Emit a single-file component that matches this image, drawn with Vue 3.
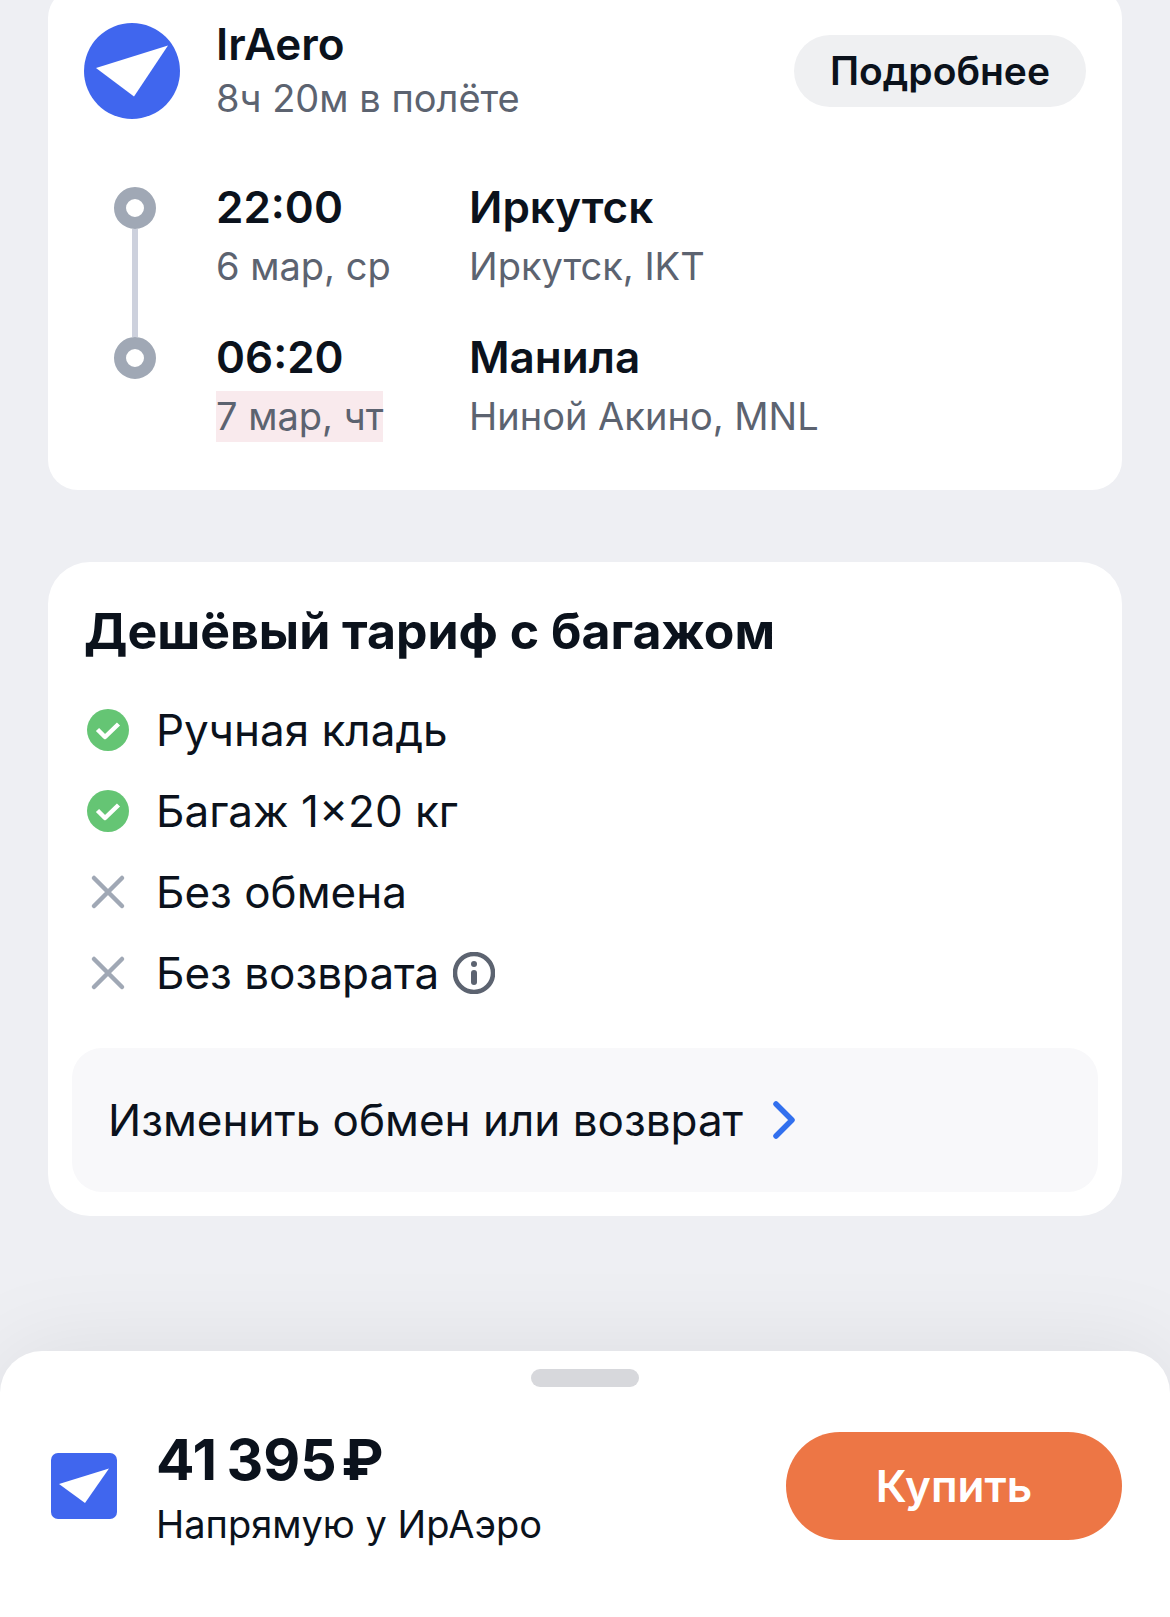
<script setup>
const stops = [
  { time: '22:00', date: '6 мар, ср', city: 'Иркутск', airport: 'Иркутск, IKT', nextDay: false },
  { time: '06:20', date: '7 мар, чт', city: 'Манила', airport: 'Ниной Акино, MNL', nextDay: true },
]

const conditions = [
  { text: 'Ручная кладь', included: true },
  { text: 'Багаж 1×20 кг', included: true },
  { text: 'Без обмена', included: false },
  { text: 'Без возврата', included: false, info: true },
]
</script>

<template>
  <div class="page">
    <main class="content">
      <section class="card flight">
        <header class="carrier">
          <svg class="carrier-logo" viewBox="0 0 96 96" aria-hidden="true">
            <circle cx="48" cy="48" r="48" fill="#4066ee" />
            <path d="M12 45 84 22.500 50 73.500Z" fill="#fff" />
          </svg>
          <div class="carrier-text">
            <h2 class="strong">IrAero</h2>
            <p class="muted">8ч 20м в полёте</p>
          </div>
          <button type="button" class="details">Подробнее</button>
        </header>

        <ol class="route">
          <li v-for="stop in stops" :key="stop.time" class="stop">
            <span class="track"><span class="dot"></span></span>
            <div class="when">
              <time class="strong">{{ stop.time }}</time>
              <span class="muted date" :class="{ shifted: stop.nextDay }">{{ stop.date }}</span>
            </div>
            <div class="where">
              <span class="strong">{{ stop.city }}</span>
              <span class="muted">{{ stop.airport }}</span>
            </div>
          </li>
        </ol>
      </section>

      <section class="card fare">
        <h2 class="fare-title">Дешёвый тариф с багажом</h2>
        <ul class="conditions">
          <li v-for="item in conditions" :key="item.text" class="condition">
            <svg v-if="item.included" class="icon" viewBox="0 0 42 42" aria-hidden="true">
              <circle cx="21" cy="21" r="21" fill="#65c574" />
              <path d="M10.500 20.500 18 28 31.500 15" fill="none" stroke="#fff" stroke-width="4.500" stroke-linejoin="round" />
            </svg>
            <svg v-else class="icon" viewBox="0 0 42 42" aria-hidden="true">
              <path d="M7 7 35 35M35 7 7 35" fill="none" stroke="#a0a8b5" stroke-width="4.500" stroke-linecap="round" />
            </svg>
            <span>{{ item.text }}</span>
            <button v-if="item.info" type="button" class="info" aria-label="Подробнее о возврате">
              <svg class="icon" viewBox="0 0 42 42" aria-hidden="true">
                <circle cx="21" cy="21" r="19" fill="none" stroke="#5c6370" stroke-width="4.500" />
                <circle cx="21" cy="12" r="3" fill="#5c6370" />
                <path d="M21 21V30" stroke="#5c6370" stroke-width="6" stroke-linecap="round" />
              </svg>
            </button>
          </li>
        </ul>
        <button type="button" class="change">
          <span>Изменить обмен или возврат</span>
          <svg class="chevron" viewBox="0 0 24 38" aria-hidden="true">
            <path d="M3 3 19 19 3 35" fill="none" stroke="#3270ee" stroke-width="5.500" stroke-linecap="round" stroke-linejoin="round" />
          </svg>
        </button>
      </section>
    </main>

    <footer class="sheet">
      <div class="handle"></div>
      <div class="offer">
        <svg class="agent-logo" viewBox="0 0 66 66" aria-hidden="true">
          <rect width="66" height="66" rx="7" fill="#4066ee" />
          <path d="M8 31 58 15.500 34 50Z" fill="#fff" />
        </svg>
        <div class="offer-text">
          <strong class="price">41&#8198;395&#8202;₽</strong>
          <span class="agent">Напрямую у ИрАэро</span>
        </div>
        <button type="button" class="buy">Купить</button>
      </div>
    </footer>
  </div>
</template>

<style>
body {
  margin: 0;
  background: #eeeff3;
}
</style>

<style scoped>
.page {
  min-height: 100vh;
  display: flex;
  flex-direction: column;
  overflow: hidden;
  background: #eeeff3;
  color: #0b121c;
  font-family: Inter, "Liberation Sans", sans-serif;
  font-size: 44px;
  line-height: 54px;
}

h2,
p,
ol,
ul {
  margin: 0;
  padding: 0;
  list-style: none;
}

button {
  border: 0;
  padding: 0;
  font: inherit;
  color: inherit;
  cursor: pointer;
}

svg {
  display: block;
  flex: none;
}

.content {
  flex: 1;
  display: flex;
  flex-direction: column;
  gap: 72px;
  margin-top: -12px;
  padding: 0 48px 135px;
}

.card {
  background: #fff;
}

.strong {
  font-size: 44px;
  line-height: 54px;
  font-weight: 600;
}

.muted {
  font-size: 38px;
  line-height: 51px;
  color: #5c6370;
}

.flight {
  padding: 29px 36px 48px;
  border-radius: 30px;
}

.carrier {
  display: flex;
  align-items: center;
  gap: 36px;
}

.carrier-logo {
  width: 96px;
  height: 96px;
}

.carrier-text {
  flex: 1;
  display: flex;
  flex-direction: column;
  gap: 2px;
}

.details {
  height: 72px;
  padding: 0 36px;
  border-radius: 36px;
  background: #eff0f2;
  font-size: 39px;
  font-weight: 600;
}

.route {
  margin-top: 56px;
}

.stop {
  display: flex;
}

.stop + .stop {
  margin-top: 38px;
}

.track {
  position: relative;
  box-sizing: border-box;
  width: 132px;
  padding: 7px 0 0 30px;
}

.dot {
  display: block;
  box-sizing: border-box;
  width: 42px;
  height: 42px;
  border: 12px solid #a0a8b5;
  border-radius: 50%;
}

.stop:first-child .track::after {
  content: "";
  position: absolute;
  left: 48px;
  top: 49px;
  width: 6px;
  height: 108px;
  background: #cdd1dd;
}

.when,
.where {
  display: flex;
  flex-direction: column;
  align-items: flex-start;
  gap: 7px;
}

.when {
  width: 253px;
}

.shifted {
  background: #f9eaed;
}

.fare {
  padding: 39px 24px 24px;
  border-radius: 42px;
}

.fare-title {
  padding: 0 12px;
  font-size: 50px;
  line-height: 60px;
  font-weight: 700;
}

.conditions {
  display: flex;
  flex-direction: column;
  gap: 27px;
  margin: 42px 0 48px;
  padding: 0 15px;
}

.condition {
  display: flex;
  align-items: center;
}

.condition > span {
  margin-left: 27px;
}

.icon {
  width: 42px;
  height: 42px;
}

.info {
  margin-left: 14px;
  background: none;
}

.change {
  display: flex;
  align-items: center;
  gap: 30px;
  width: 100%;
  height: 144px;
  padding: 0 36px;
  border-radius: 30px;
  background: #f8f8fa;
}

.chevron {
  width: 24px;
  height: 38px;
}

.sheet {
  padding: 18px 48px 69px;
  border-radius: 42px 42px 0 0;
  background: #fff;
  box-shadow: 0 0 96px rgba(0, 0, 0, 0.08);
}

.handle {
  width: 108px;
  height: 18px;
  margin: 0 auto 37px;
  border-radius: 9px;
  background: #d7d8dc;
}

.offer {
  display: flex;
  align-items: center;
}

.agent-logo {
  width: 66px;
  height: 66px;
  margin: 0 39px 0 3px;
}

.offer-text {
  flex: 1;
  display: flex;
  flex-direction: column;
  gap: 10px;
  padding-top: 6px;
}

.price {
  font-size: 57px;
  line-height: 60px;
  font-weight: 700;
}

.agent {
  font-size: 38px;
  line-height: 48px;
}

.buy {
  width: 336px;
  height: 108px;
  border-radius: 54px;
  background: #ed7645;
  color: #fff;
  font-weight: 600;
}
</style>
